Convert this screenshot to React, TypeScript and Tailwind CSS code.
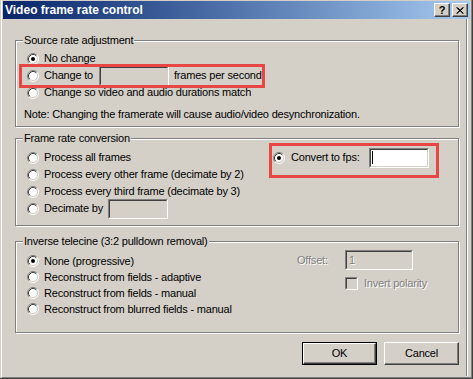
import type { ReactNode } from 'react';

const Radio = ({ checked }: { checked?: boolean }) => (
  <svg width="12" height="12" viewBox="0 0 12 12" className="shrink-0">
    <circle cx="6" cy="6" r="4.5" fill="#fff" />
    <path d="M2.11 9.89A5.5 5.5 0 0 1 9.89 2.11" stroke="#808080" fill="none" />
    <path d="M9.89 2.11A5.5 5.5 0 0 1 2.11 9.89" stroke="#fff" fill="none" />
    <path d="M2.82 9.18A4.5 4.5 0 0 1 9.18 2.82" stroke="#404040" fill="none" />
    <path d="M9.18 2.82A4.5 4.5 0 0 1 2.82 9.18" stroke="#D4D0C8" fill="none" />
    {checked && <circle cx="6" cy="6" r="2" fill="#000" />}
  </svg>
);

function Sunken({ className, white, children }: { className: string; white?: boolean; children?: ReactNode }) {
  return (
    <div className={`border border-t-[#808080] border-l-[#808080] border-b-white border-r-white ${className}`}>
      <div
        className={`h-full flex items-center border border-t-[#404040] border-l-[#404040] border-b-[#D4D0C8] border-r-[#D4D0C8] ${
          white ? 'bg-white' : 'bg-[#D4D0C8]'
        }`}
      >
        {children}
      </div>
    </div>
  );
}

function Group({ label, className, children }: { label: string; className: string; children: ReactNode }) {
  return (
    <div className={`relative w-[444px] border border-[#808080] shadow-[inset_1px_1px_0_#fff,1px_1px_0_#fff] ${className}`}>
      <span className="absolute top-[-7px] left-[7px] bg-[#D4D0C8] px-[1px] leading-[13px]">{label}</span>
      {children}
    </div>
  );
}

function Option({ label, checked, h = 'h-[17px]', children }: { label: string; checked?: boolean; h?: string; children?: ReactNode }) {
  return (
    <div className={`${h} flex items-center pl-[3px]`}>
      <Radio checked={checked} />
      <span className="ml-[5px] whitespace-nowrap">{label}</span>
      {children}
    </div>
  );
}

const disabled = 'text-[#808080] [text-shadow:1px_1px_0_#fff]';

function Button({ label, primary }: { label: string; primary?: boolean }) {
  const face = (
    <div className="h-full flex items-center justify-center border border-t-white border-l-white border-b-[#404040] border-r-[#404040] shadow-[inset_-1px_-1px_0_#808080]">
      {label}
    </div>
  );
  return primary ? (
    <div className="w-[75px] h-[23px] border border-black">{face}</div>
  ) : (
    <div className="w-[75px] h-[23px]">{face}</div>
  );
}

function TitleButton({ children }: { children: ReactNode }) {
  return (
    <div className="w-[16px] h-[14px] bg-[#D4D0C8] border border-t-white border-l-white border-b-[#404040] border-r-[#404040] shadow-[inset_-1px_-1px_0_#808080] flex items-center justify-center">
      {children}
    </div>
  );
}

export default function App() {
  return (
    <div className="relative w-[473px] h-[379px] overflow-hidden bg-[#D4D0C8] text-[11px] leading-[13px] tracking-[-0.2px] text-black font-['Liberation_Sans',Arial,sans-serif]">
      <div className="h-full pl-[1px] border-r border-b border-[#404040]">
        <div className="h-full flex flex-col border-l border-l-white border-r border-r-[#808080] border-b border-b-[#808080] pt-[1px] px-[1px]">
          {/* title bar */}
          <div className="h-[18px] shrink-0 flex items-center justify-between pl-[2px] pr-[2px] bg-gradient-to-r from-[#0A246A] to-[#A6CAF0]">
            <span className="text-white font-bold text-[12px] tracking-normal">Video frame rate control</span>
            <div className="flex gap-[2px]">
              <TitleButton>
                <span className="font-bold text-[11px] leading-none">?</span>
              </TitleButton>
              <TitleButton>
                <svg width="8" height="7" viewBox="0 0 8 7">
                  <path d="M0.5 0.5L7 6.5M1.5 0.5L7.5 6.5M7 0.5L0.5 6.5M7.5 0.5L1 6.5" stroke="#000" strokeWidth="1" />
                </svg>
              </TitleButton>
            </div>
          </div>

          <div className="flex-1 mr-[3px] mb-[1px] border-r border-r-[#808080] shadow-[1px_0_0_#fff] pl-[12px] pt-[21px]">
            <Group label="Source rate adjustment" className="h-[87px] pt-[9px] pl-[8px]">
              <Option label="No change" checked />
              <div className="h-[17px] flex items-center pl-[3px]">
                <Radio />
                <span className="ml-[5px] w-[55px]">Change to</span>
                <Sunken className="w-[70px] h-[20px] shrink-0" />
                <span className="ml-[5px]">frames per second</span>
              </div>
              <Option label="Change so video and audio durations match" />
              <div className="mt-[5px] h-[17px] flex items-center">
                Note: Changing the framerate will cause audio/video desynchronization.
              </div>
            </Group>

            <Group label="Frame rate conversion" className="mt-[11px] h-[88px] pt-[10px] pl-[8px] flex">
              <div className="w-[246px]">
                <Option label="Process all frames" />
                <Option label="Process every other frame (decimate by 2)" />
                <Option label="Process every third frame (decimate by 3)" />
                <div className="h-[17px] flex items-center pl-[3px]">
                  <Radio />
                  <span className="ml-[5px] w-[64px]">Decimate by</span>
                  <Sunken className="w-[60px] h-[20px] shrink-0" />
                </div>
              </div>
              <div className="h-[17px] flex items-center pl-[3px]">
                <Radio checked />
                <span className="ml-[6px] w-[78px]">Convert to fps:</span>
                <Sunken className="w-[60px] h-[20px] shrink-0" white>
                  <span className="ml-[1px] w-[1px] h-[13px] bg-black" />
                </Sunken>
              </div>
            </Group>

            <Group label="Inverse telecine (3:2 pulldown removal)" className="mt-[15px] h-[92px] pl-[8px] flex">
              <div className="w-[273px] pt-[11px]">
                <Option h="h-[16px]" label="None (progressive)" checked />
                <Option h="h-[16px]" label="Reconstruct from fields - adaptive" />
                <Option h="h-[16px]" label="Reconstruct from fields - manual" />
                <Option h="h-[16px]" label="Reconstruct from blurred fields - manual" />
              </div>
              <div className="pt-[8px]">
                <div className="flex items-center">
                  <span className={`w-[48px] ${disabled}`}>Offset:</span>
                  <Sunken className="w-[68px] h-[20px]">
                    <span className={`ml-[2px] ${disabled}`}>1</span>
                  </Sunken>
                </div>
                <div className="mt-[7px] pl-[48px] flex items-center">
                  <Sunken className="w-[13px] h-[13px]" />
                  <span className={`ml-[6px] ${disabled}`}>Invert polarity</span>
                </div>
              </div>
            </Group>

            <div className="mt-[9px] w-[444px] flex justify-end gap-[7px]">
              <Button label="OK" primary />
              <Button label="Cancel" />
            </div>
          </div>
        </div>
      </div>

      {/* annotation boxes */}
      <div className="absolute left-[19px] top-[64px] w-[246px] h-[24px] border-[3px] border-[#E84545]" />
      <div className="absolute left-[269px] top-[143px] w-[170px] h-[35px] border-[3px] border-[#E84545]" />
    </div>
  );
}
